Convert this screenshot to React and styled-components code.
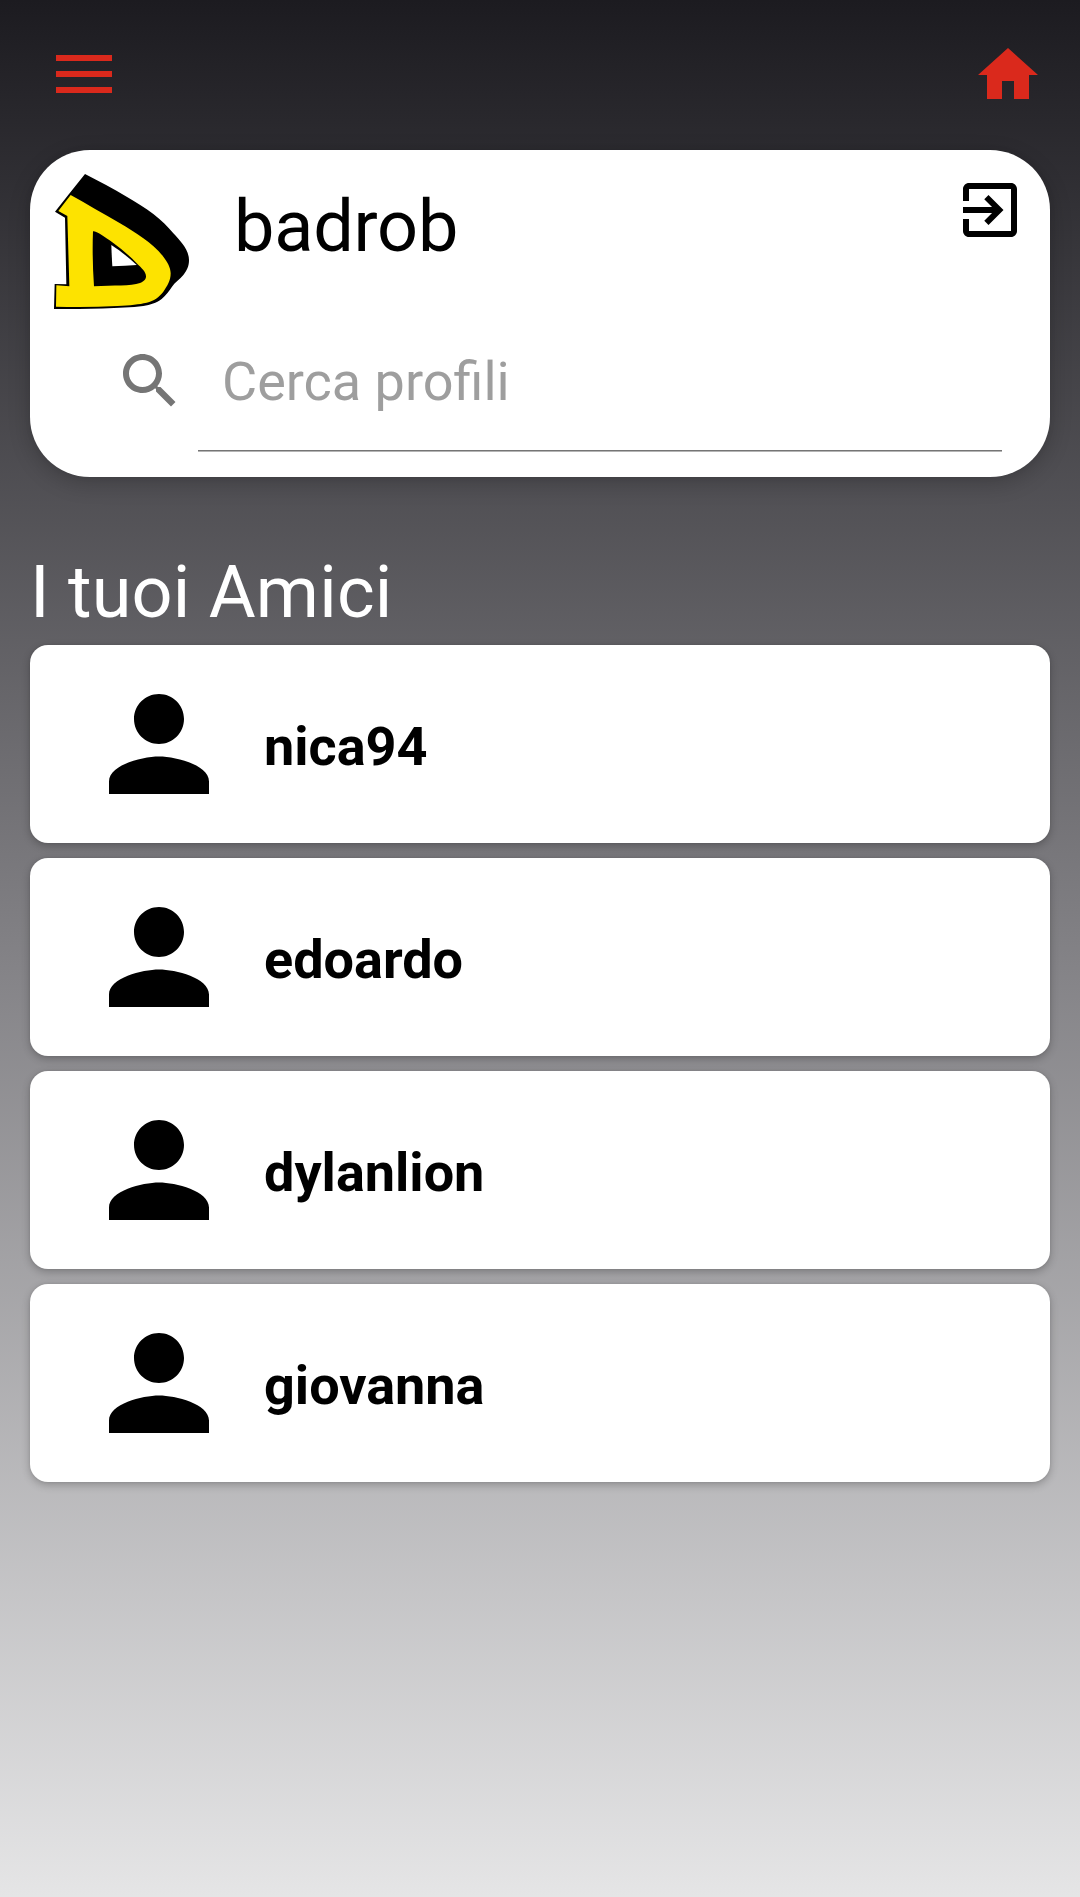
import React from "react";
import styled, { createGlobalStyle } from "styled-components";

const GlobalStyle = createGlobalStyle`
  *, *::before, *::after { box-sizing: border-box; }
  body {
    margin: 0;
    font-family: Roboto, "Liberation Sans", sans-serif;
  }
`;

const Screen = styled.main`
  height: 1897px;
  padding: 0 30px;
  background: linear-gradient(180deg, #1c1b20 0%, #828185 50%, #e5e5e6 100%);
`;

const Toolbar = styled.header`
  display: flex;
  align-items: center;
  justify-content: space-between;
  height: 150px;
  padding: 0 6px 0 26px;
`;

const MenuButton = styled.button`
  display: flex;
  flex-direction: column;
  gap: 10px;
  width: 56px;
  padding: 0;
  margin-top: -2px;
  border: 0;
  background: none;
`;

const MenuBar = styled.span`
  height: 6px;
  background: #da291c;
`;

const Icon = styled.svg`
  display: block;
  flex: none;
  width: ${(p) => p.$size}px;
  height: ${(p) => p.$size}px;
  fill: ${(p) => p.$color};
`;

const ProfileCard = styled.section`
  height: 327px;
  padding: 24px;
  border-radius: 60px;
  background: #fff;
  box-shadow: 0 6px 22px rgba(0, 0, 0, 0.2), 0 0 6px rgba(0, 0, 0, 0.06);
`;

const ProfileHeader = styled.div`
  display: flex;
  align-items: flex-start;
  height: 171px;
`;

const Logo = styled.svg`
  display: block;
  flex: none;
  width: 135px;
  height: 135px;
`;

const UserName = styled.h1`
  flex: 1;
  margin: 11px 0 0 45px;
  font-size: 72px;
  font-weight: 400;
  line-height: 84px;
  letter-spacing: -0.2px;
  color: #000;
`;

const SearchRow = styled.div`
  display: flex;
  align-items: flex-start;
  padding-left: 60px;
`;

const SearchField = styled.input`
  width: 804px;
  height: 106px;
  margin-left: 12px;
  padding: 0 24px 33px;
  border: 0;
  border-bottom: 1px solid #757575;
  box-shadow: 0 1px 0 #b4b4b4;
  outline: 0;
  background: none;
  font: 400 54px/66px Roboto, "Liberation Sans", sans-serif;
  font-variant-ligatures: common-ligatures;
  color: #000;
  &::placeholder {
    color: #9e9e9e;
    opacity: 1;
  }
`;

const SectionTitle = styled.h2`
  margin: 74px 0 10px;
  font-size: 72px;
  font-weight: 400;
  line-height: 84px;
  letter-spacing: 0.22px;
  color: #fff;
`;

const FriendList = styled.ul`
  display: flex;
  flex-direction: column;
  gap: 15px;
  margin: 0;
  padding: 0;
  list-style: none;
`;

const FriendCard = styled.li`
  display: flex;
  align-items: center;
  gap: 30px;
  height: 198px;
  padding: 0 54px;
  border-radius: 18px;
  background: #fff;
  box-shadow: 0 3px 9px rgba(0, 0, 0, 0.24), 0 0 3px rgba(0, 0, 0, 0.08);
`;

const FriendName = styled.span`
  padding-top: 6px;
  font-size: 54px;
  font-weight: 700;
  line-height: 64px;
  color: #000;
`;

const friends = ["nica94", "edoardo", "dylanlion", "giovanna"];

export default function App() {
  return (
    <>
      <GlobalStyle />
      <Screen>
        <Toolbar>
          <MenuButton aria-label="Menu">
            <MenuBar />
            <MenuBar />
            <MenuBar />
          </MenuButton>
          <Icon $size={72} $color="#da291c" viewBox="0 0 24 24">
            <path d="M10 20v-6h4v6h5v-8h3L12 3 2 12h3v8z" />
          </Icon>
        </Toolbar>

        <ProfileCard>
          <ProfileHeader>
            <Logo viewBox="0 0 405 405">
              <path d="M93 0 C135 21 178 45 218 68 C247 85 274 101 298 120 C322 138 342 159 358 178 C380 201 405 229 405 258 C405 277 399 289 388 303 C378 316 363 325 354 338 C345 352 337 362 323 375 C306 388 290 392 268 396 C200 404 100 405 0 405 L2 330 L37 331 L33 131 L3 113 L45 60 Z" />
              <path
                fill="#fde300"
                d="M50 63 L13 111 L40 126 L46 337 L7 334 L6 398 C70 400 130 399 190 396 C230 394 255 391 278 386 C300 381 315 369 328 353 C340 336 350 320 350 298 C350 280 340 264 328 248 C311 226 291 209 268 193 C245 176 222 162 198 148 C148 119 98 90 50 63 Z M117 172 C128 171 150 187 178 207 C203 226 228 246 248 268 C262 282 276 293 276 307 C276 317 269 323 258 327 C230 337 180 333 120 337 Q114 250 117 172 Z"
                fillRule="evenodd"
              />
              <path fill="#fff" d="M172 213 C196 228 223 250 248 273 Q214 275 175 277 Q173 245 172 213 Z" />
            </Logo>
            <UserName>badrob</UserName>
            <Icon $size={72} $color="#000" viewBox="0 0 24 24">
              <path d="M10.09 15.59L11.5 17l5-5-5-5-1.41 1.41L12.67 11H3v2h9.67l-2.58 2.59zM19 3H5c-1.11 0-2 .9-2 2v4h2V5h14v14H5v-4H3v4c0 1.1.89 2 2 2h14c1.1 0 2-.9 2-2V5c0-1.1-.9-2-2-2z" />
            </Icon>
          </ProfileHeader>
          <SearchRow>
            <Icon $size={72} $color="#757575" viewBox="0 0 24 24">
              <path d="M15.5 14h-.79l-.28-.27C15.41 12.59 16 11.11 16 9.5 16 5.91 13.09 3 9.5 3S3 5.91 3 9.5 5.91 16 9.5 16c1.61 0 3.09-.59 4.23-1.57l.27.28v.79l5 4.99L20.49 19l-4.99-5zm-6 0C7.01 14 5 11.99 5 9.5S7.01 5 9.5 5 14 7.01 14 9.5 11.99 14 9.5 14z" />
            </Icon>
            <SearchField type="text" placeholder="Cerca profili" />
          </SearchRow>
        </ProfileCard>

        <SectionTitle>I tuoi Amici</SectionTitle>
        <FriendList>
          {friends.map((name) => (
            <FriendCard key={name}>
              <Icon $size={150} $color="#000" viewBox="0 0 24 24">
                <path d="M12 12c2.21 0 4-1.79 4-4s-1.79-4-4-4-4 1.79-4 4 1.79 4 4 4zm0 2c-2.67 0-8 1.34-8 4v2h16v-2c0-2.66-5.33-4-8-4z" />
              </Icon>
              <FriendName>{name}</FriendName>
            </FriendCard>
          ))}
        </FriendList>
      </Screen>
    </>
  );
}
